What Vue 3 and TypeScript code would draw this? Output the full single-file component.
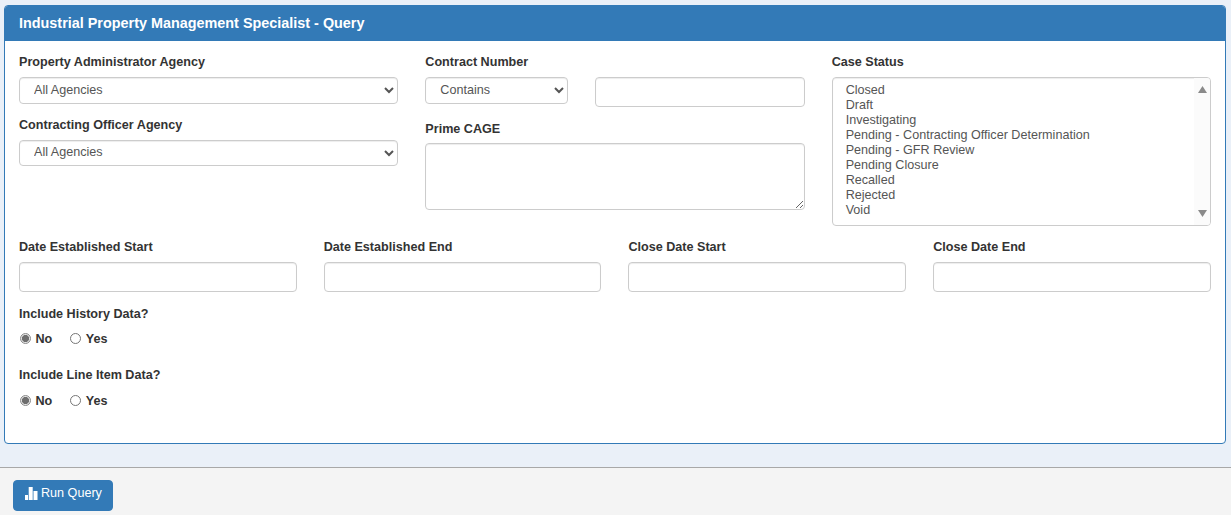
<script setup lang="ts">
const statuses: string[] = [
  'Closed',
  'Draft',
  'Investigating',
  'Pending - Contracting Officer Determination',
  'Pending - GFR Review',
  'Pending Closure',
  'Recalled',
  'Rejected',
  'Void',
]
const dates: string[] = ['Date Established Start', 'Date Established End', 'Close Date Start', 'Close Date End']
const radios: { label: string; name: string }[] = [
  { label: 'Include History Data?', name: 'history' },
  { label: 'Include Line Item Data?', name: 'lineItem' },
]
</script>

<template>
  <div class="page">
    <main class="content">
      <section class="panel">
        <h1 class="panel-head">Industrial Property Management Specialist - Query</h1>
        <form class="panel-body" @submit.prevent>
          <div class="top-row">
            <div class="col">
              <label class="lbl">Property Administrator Agency</label>
              <select class="ctl sel"><option>All Agencies</option></select>
              <label class="lbl second">Contracting Officer Agency</label>
              <select class="ctl sel"><option>All Agencies</option></select>
            </div>
            <div class="col">
              <label class="lbl">Contract Number</label>
              <div class="contract">
                <select class="ctl sel op"><option>Contains</option></select>
                <input class="ctl inp" type="text" />
              </div>
              <label class="lbl cage">Prime CAGE</label>
              <textarea class="ctl area"></textarea>
            </div>
            <div class="col">
              <label class="lbl">Case Status</label>
              <div class="list" role="listbox" aria-multiselectable="true">
                <div class="options">
                  <div v-for="s in statuses" :key="s" class="opt" role="option">{{ s }}</div>
                </div>
                <div class="bar" aria-hidden="true">
                  <svg width="9" height="7" viewBox="0 0 9 7"><path d="M4.5 0 9 7H0z" fill="#8a8a8a" /></svg>
                  <svg width="9" height="7" viewBox="0 0 9 7"><path d="M4.5 7 9 0H0z" fill="#8a8a8a" /></svg>
                </div>
              </div>
            </div>
          </div>
          <div class="date-row">
            <div v-for="d in dates" :key="d" class="date-col">
              <label class="lbl">{{ d }}</label>
              <input class="ctl inp" type="text" />
            </div>
          </div>
          <div v-for="r in radios" :key="r.name" class="radio-group">
            <label class="lbl">{{ r.label }}</label>
            <div class="radios">
              <label class="radio"><input type="radio" :name="r.name" checked /><span>No</span></label>
              <label class="radio"><input type="radio" :name="r.name" /><span>Yes</span></label>
            </div>
          </div>
        </form>
      </section>
    </main>
    <footer class="foot">
      <button class="run" type="button">
        <svg width="13" height="13" viewBox="0 0 13 13"><path d="M0 8h3v5H0zM3.7 0h4v13h-4zM8.5 4h4v9h-4z" fill="#fff" /></svg>
        <span>Run Query</span>
      </button>
    </footer>
  </div>
</template>

<style scoped>
.page {
  height: 515px;
  display: flex;
  flex-direction: column;
  background: #eaf0f8;
  font-family: "Liberation Sans", Arial, sans-serif;
  font-size: 12.6px;
  color: #333;
  overflow: hidden;
}
.content {
  flex: 1;
  padding: 5px 5px 0 4px;
}
.panel {
  height: 439px;
  box-sizing: border-box;
  background: #fff;
  border: 1px solid #337ab7;
  border-radius: 4px;
  overflow: hidden;
}
.panel-head {
  margin: 0;
  height: 35px;
  padding-left: 14px;
  background: #337ab7;
  color: #fff;
  font-size: 14.4px;
  font-weight: 700;
  line-height: 34px;
}
.panel-body {
  padding: 10px 14px 0;
}
.top-row {
  display: grid;
  grid-template-columns: repeat(3, 1fr);
  column-gap: 27px;
  height: 185px;
}
.lbl {
  display: block;
  height: 20px;
  line-height: 22px;
  font-weight: 700;
  margin-bottom: 6px;
}
.second {
  margin-top: 10px;
}
.cage {
  margin-top: 11px;
  margin-bottom: 5px;
}
.ctl {
  display: block;
  width: 100%;
  box-sizing: border-box;
  background: #fff;
  border: 1px solid #ccc;
  border-radius: 4px;
  color: #555;
  font-family: inherit;
  font-size: 12.6px;
  box-shadow: inset 0 1px 1px rgba(0, 0, 0, 0.075);
}
.sel {
  height: 26.6px;
  padding: 0 0 1px 10px;
}
.inp {
  height: 30px;
  padding: 0 12px;
}
.contract {
  display: flex;
  align-items: flex-start;
  gap: 27px;
}
.op {
  width: 143px;
  flex: none;
}
.contract .inp {
  flex: 1;
  width: auto;
  min-width: 0;
}
.area {
  height: 67px;
  padding: 6px 12px;
  resize: vertical;
}
.list {
  display: flex;
  height: 149px;
  box-sizing: border-box;
  border: 1px solid #ccc;
  border-radius: 4px;
  color: #555;
  overflow: hidden;
  box-shadow: inset 0 1px 1px rgba(0, 0, 0, 0.075);
}
.options {
  flex: 1;
  padding: 4.5px 13px;
}
.opt {
  height: 15.1px;
  line-height: 15px;
  white-space: nowrap;
}
.bar {
  flex: none;
  width: 16px;
  background: #fbfbfb;
  display: flex;
  flex-direction: column;
  justify-content: space-between;
  align-items: center;
  padding: 8px 0;
}
.date-row {
  display: grid;
  grid-template-columns: repeat(4, 1fr);
  column-gap: 27px;
  margin: 0 0.1px 11px -0.1px;
}
.date-col .lbl {
  margin-bottom: 6px;
}
.radio-group {
  margin-bottom: 13px;
}
.radio-group .lbl {
  margin-bottom: 3px;
}
.radio-group:last-child .lbl {
  margin-bottom: 4px;
}
.radios {
  display: flex;
  gap: 17px;
  height: 25px;
  align-items: center;
}
.radio {
  display: flex;
  align-items: center;
  gap: 4.5px;
  font-weight: 700;
}
.radio input {
  appearance: none;
  width: 11px;
  height: 11px;
  margin: 0 0 0 1px;
  border: 1px solid #767676;
  border-radius: 50%;
  background: #fff;
}
.radio input:checked {
  border-color: #8a8a8a;
  background: radial-gradient(circle, #6e6e6e 0 3.2px, #e4e4e4 3.9px);
}
.foot {
  flex: none;
  height: 48px;
  box-sizing: border-box;
  border-top: 1px solid #a8a8a8;
  background: #f4f4f4;
  padding: 12px 13px 0;
}
.run {
  display: flex;
  align-items: center;
  gap: 3px;
  width: 100px;
  height: 31px;
  padding: 0 0 5px 11px;
  box-sizing: border-box;
  border: 1px solid #337ab7;
  border-radius: 4px;
  background: #337ab7;
  color: #fff;
  font-family: inherit;
  font-size: 12.6px;
}
</style>
